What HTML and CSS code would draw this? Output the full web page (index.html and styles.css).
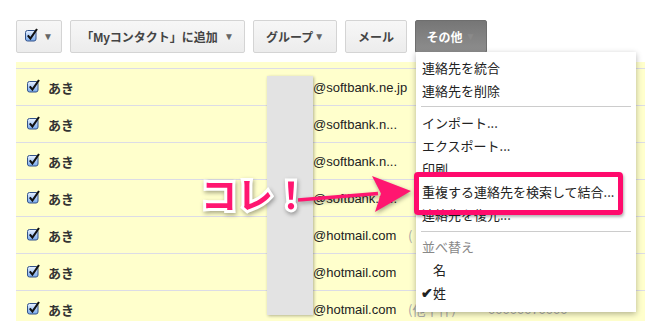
FILE: index.html
```html
<!DOCTYPE html>
<html lang="ja">
<head>
<meta charset="UTF-8">
<title>連絡先</title>
<link rel="stylesheet" href="styles.css">
</head>
<body>

<svg width="0" height="0" class="defs">
    <defs>
        <linearGradient id="cbFill" x1="0" y1="0" x2="0" y2="1">
            <stop offset="0" stop-color="#e8f1ff"/>
            <stop offset="1" stop-color="#78aaee"/>
        </linearGradient>
        <symbol id="cb" viewBox="0 0 13 14">
            <rect x="0.5" y="2.5" width="10.5" height="10.5" rx="2" fill="url(#cbFill)" stroke="#34538a"/>
            <path d="M2.8 7.4 L5.4 10.6 L12 1" fill="none" stroke="#111" stroke-width="2.1"/>
        </symbol>
    </defs>
</svg>

<div class="toolbar">
    <button class="btn btn-check">
        <svg class="cb" width="13" height="14"><use href="#cb"/></svg>
        <span class="caret">▼</span>
    </button>
    <button class="btn btn-add">「Myコンタクト」に追加 <span class="caret">▼</span></button>
    <button class="btn btn-group">グループ<span class="caret">▼</span></button>
    <button class="btn btn-mail">メール</button>
    <button class="btn btn-more">その他 <span class="caret">▼</span></button>
</div>

<div class="list">
    <div class="row"><svg class="check" width="13" height="14"><use href="#cb"/></svg><span class="name">あき</span><span class="mail">@softbank.ne.jp</span></div>
    <div class="row"><svg class="check" width="13" height="14"><use href="#cb"/></svg><span class="name">あき</span><span class="mail">@softbank.n...</span></div>
    <div class="row"><svg class="check" width="13" height="14"><use href="#cb"/></svg><span class="name">あき</span><span class="mail">@softbank.n...</span></div>
    <div class="row"><svg class="check" width="13" height="14"><use href="#cb"/></svg><span class="name">あき</span><span class="mail">@softbank.n...</span></div>
    <div class="row"><svg class="check" width="13" height="14"><use href="#cb"/></svg><span class="name">あき</span><span class="mail">@hotmail.com</span><span class="note">(</span></div>
    <div class="row"><svg class="check" width="13" height="14"><use href="#cb"/></svg><span class="name">あき</span><span class="mail">@hotmail.com</span></div>
    <div class="row"><svg class="check" width="13" height="14"><use href="#cb"/></svg><span class="name">あき</span><span class="mail">@hotmail.com</span><span class="note">(他千件)</span><span class="tel">00000070000</span></div>
</div>

<div class="ghost"></div>

<div class="menu">
    <div class="item">連絡先を統合</div>
    <div class="item">連絡先を削除</div>
    <div class="sep"></div>
    <div class="item">インポート...</div>
    <div class="item">エクスポート...</div>
    <div class="item">印刷</div>
    <div class="item">重複する連絡先を検索して結合...</div>
    <div class="item">連絡先を復元...</div>
    <div class="sep sep-low"></div>
    <div class="item label">並べ替え</div>
    <div class="item sub">名</div>
    <div class="item sub"><span class="tick">✔</span>姓</div>
</div>

<div class="highlight"></div>

<div class="callout">コレ！</div>
<svg class="arrow" width="130" height="50" viewBox="0 0 130 50">
    <path d="M8 30 L88 23.5" stroke="#ff1670" stroke-width="3.5" fill="none"/>
    <polygon points="121,21 82,6 91,23.5 85,42" fill="#ff1670"/>
</svg>

</body>
</html>
```

FILE: styles.css
```css
body {
    margin: 0;
    background: #fff;
    font-family: "Liberation Sans", "Noto Sans CJK JP", sans-serif;
    color: #222;
    width: 645px;
    height: 321px;
    overflow: hidden;
    position: relative;
}

.defs {
    position: absolute;
}

.toolbar {
    display: flex;
    gap: 8px;
    padding: 20px 0 0 16px;
}

.btn {
    height: 33px;
    border: 1px solid #d4d4d4;
    border-radius: 2px;
    background: linear-gradient(#f7f7f7, #ececec);
    font-family: "Liberation Sans", "Noto Sans CJK JP", sans-serif;
    font-size: 12px;
    font-weight: bold;
    color: #444;
    padding: 0;
    display: flex;
    align-items: center;
    justify-content: center;
}

.caret {
    font-size: 10px;
    color: #666;
    margin-left: 3px;
}

.btn-check { width: 46px; gap: 2px; }
.btn-check .cb { margin-top: -3px; }
.btn-add { width: 175px; }
.btn-add .caret { margin-left: 6px; }
.btn-group { width: 84px; }
.btn-group .caret { margin-left: 1px; }
.btn-mail { width: 62px; }

.btn-more {
    width: 72px;
    border-color: #6e6e6e;
    background: linear-gradient(#767676, #8e8e8e);
    color: #fff;
}
.btn-more .caret { color: #8a8a8a; }

.list {
    margin: 9px 0 0 16px;
    background: #ffffcc;
    padding-top: 6px;
    height: 260px;
}

.row {
    height: 36px;
    border-top: 1px solid #dcdce6;
    display: flex;
    align-items: center;
    font-size: 13px;
}

.check {
    margin: -3px 8px 0 11px;
    flex: none;
}

.name {
    width: 265px;
    font-family: "Noto Sans CJK JP", sans-serif;
    font-weight: bold;
    color: #333;
}

.mail {
    width: 95px;
    white-space: nowrap;
}

.note {
    width: 80px;
    color: #aaa;
    font-family: "Noto Sans CJK JP", sans-serif;
}

.tel {
    color: #aaa;
}

.ghost {
    position: absolute;
    left: 267px;
    top: 76px;
    width: 46px;
    height: 239px;
    background: #e3e3e3;
    box-shadow: 1px 1px 3px rgba(0, 0, 0, 0.3);
}

.menu {
    position: absolute;
    left: 416px;
    top: 52px;
    width: 220px;
    height: 256px;
    padding: 4px 0 0;
    background: #fff;
    box-shadow: 0 2px 6px rgba(0, 0, 0, 0.3);
    font-family: "Noto Sans CJK JP", sans-serif;
    font-size: 13px;
    color: #222;
}

.item {
    height: 23px;
    line-height: 23px;
    padding-left: 6px;
    white-space: nowrap;
}

.item.label { color: #888; }
.item.sub { padding-left: 17px; position: relative; }

.tick {
    position: absolute;
    left: 5px;
    font-size: 14px;
    font-weight: bold;
}

.sep {
    height: 1px;
    margin: 4px 5px 4px 5px;
    background: #ccc;
}

.sep-low { margin-top: 5px; margin-bottom: 3px; }

.highlight {
    position: absolute;
    left: 414px;
    top: 172px;
    width: 199px;
    height: 33px;
    border: 5px solid #ff0a6c;
    border-radius: 4px;
    box-shadow: 1px 2px 3px rgba(0, 0, 0, 0.3);
}

.callout {
    position: absolute;
    left: 201px;
    top: 169px;
    font-family: "Noto Sans CJK JP", sans-serif;
    font-weight: bold;
    font-size: 36px;
    line-height: 48px;
    color: #ff1670;
    -webkit-text-stroke: 6px #fff;
    paint-order: stroke fill;
    filter: drop-shadow(1px 2px 2px rgba(0, 0, 0, 0.35));
}

.arrow {
    position: absolute;
    left: 290px;
    top: 170px;
    filter: drop-shadow(1px 2px 2px rgba(0, 0, 0, 0.35));
}
```
